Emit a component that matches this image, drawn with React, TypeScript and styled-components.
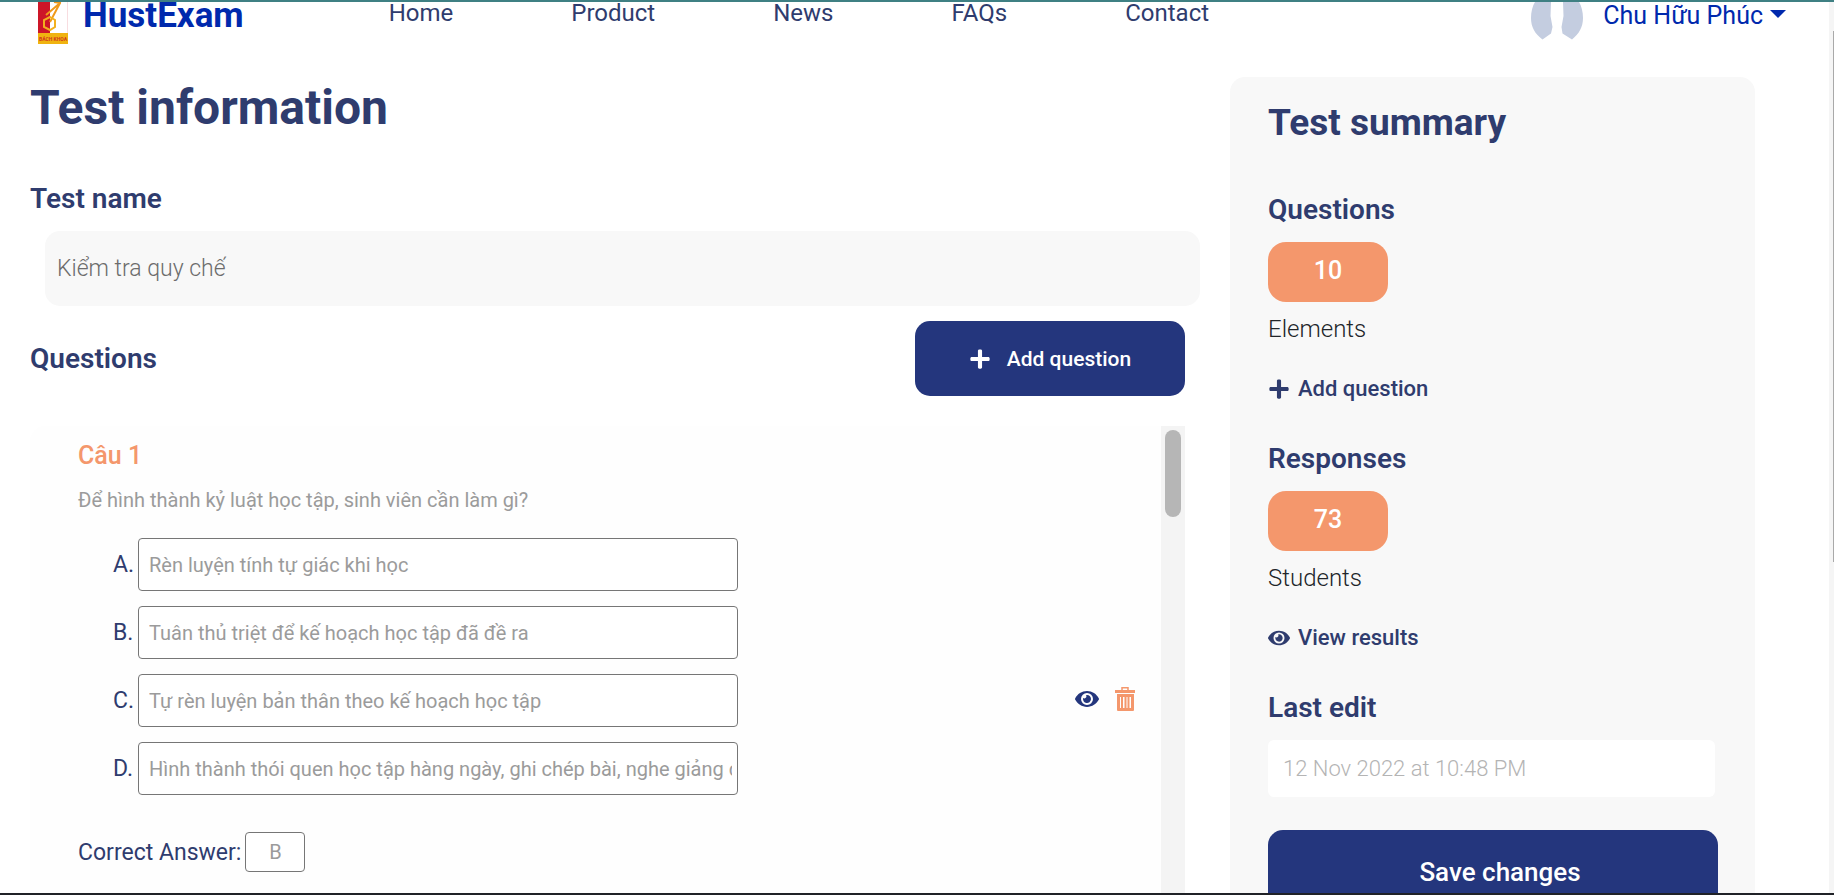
import React from "react";
import styled, { createGlobalStyle } from "styled-components";
import { FaEye, FaPlus } from "react-icons/fa";

const navy = "#2f3c6e";
const royal = "#24367d";
const orange = "#f4976c";

const GlobalStyle = createGlobalStyle`
  *, *::before, *::after { box-sizing: border-box; }
  body { margin: 0; background: #fff; font-family: Roboto, sans-serif; color: #212529; }
  h1, h2, h3, p { margin: 0; }
  button, input { font-family: inherit; }
  button { cursor: pointer; border: 0; padding: 0; }
  a { color: inherit; text-decoration: none; }
`;

const Screen = styled.div`
  display: flex;
  height: 100vh;
  overflow: hidden;
  border-top: 2px solid #3f8083;
  border-bottom: 2px solid #202227;
`;

const Page = styled.div`
  flex: 1;
  min-width: 0;
`;

const PageScroll = styled.div`
  display: flex;
  justify-content: flex-end;
  width: 5px;
  padding-top: 29px;
  background: #f5f5f5;
`;

const PageThumb = styled.div`
  width: 1px;
  height: 531px;
  background: #a9a9a9;
`;

const Header = styled.header`
  display: flex;
  align-items: flex-start;
  height: 75px;
  padding: 0 43px 0 38px;
`;

const Brand = styled.a`
  display: flex;
  gap: 14px;
  color: #0029ad;
  font-size: 35px;
  font-weight: 700;
  line-height: 28px;
`;

const Nav = styled.nav`
  display: flex;
  flex: 1;
  gap: 118px;
  padding-left: 145px;
  color: ${navy};
  font-size: 24px;
  line-height: 22px;
`;

const Account = styled.button`
  display: flex;
  align-items: flex-start;
  background: none;
  color: #0029ad;
  font-size: 25px;
  line-height: 28px;
`;

const AccountName = styled.span`
  margin: 0 7px 0 20px;
`;

const Caret = styled.span`
  margin-top: 8px;
  border: 8px solid transparent;
  border-top-color: #0029ad;
  border-bottom: 0;
`;

const Columns = styled.div`
  display: grid;
  grid-template-columns: minmax(0, 1170fr) minmax(0, 525fr);
  align-items: start;
  gap: 30px;
  padding: 0 74px 0 30px;
`;

const Editor = styled.main`
  padding-top: 2px;
`;

const PageTitle = styled.h1`
  color: ${navy};
  font-size: 48px;
  font-weight: 700;
  line-height: 58px;
`;

const Heading = styled.h3`
  color: ${navy};
  font-size: 28px;
  font-weight: 600;
  line-height: 34px;
`;

const NameLabel = styled.label`
  display: block;
  margin-top: 45px;
`;

const NameInput = styled.input`
  display: block;
  width: calc(100% - 15px);
  height: 75px;
  margin: 15px 0 0 15px;
  padding: 0 12px;
  border: 0;
  border-radius: 15px;
  background: #f8f8f8;
  color: #6c6c6c;
  font-size: 23px;
  font-weight: 300;
`;

const QuestionsBar = styled.div`
  display: flex;
  align-items: center;
  justify-content: space-between;
  margin: 15px 15px 0 0;
`;

const AddButton = styled.button`
  display: flex;
  align-items: center;
  justify-content: center;
  gap: 16px;
  width: 270px;
  height: 75px;
  border-radius: 15px;
  background: ${royal};
  color: #fff;
  font-size: 21px;
  font-weight: 500;
`;

const QuestionList = styled.section`
  display: flex;
  height: 2400px;
  margin: 30px 15px 0 0;
  border-radius: 15px 0 0 0;
  background: #fefefe;
`;

const QuestionCard = styled.article`
  display: flex;
  flex: 1;
  align-items: center;
  align-self: flex-start;
  justify-content: space-between;
  min-width: 0;
  padding-right: 26px;
`;

const QuestionContent = styled.div`
  padding: 14px 0 100px 48px;
`;

const ListScroll = styled.div`
  width: 24px;
  padding: 4px;
  background: #f4f4f4;
`;

const ListThumb = styled.div`
  height: 87px;
  border-radius: 8px;
  background: #b6b6b6;
`;

const QuestionNumber = styled.h2`
  color: ${orange};
  font-size: 25px;
  font-weight: 500;
  line-height: 31px;
`;

const QuestionText = styled.p`
  margin-top: 14px;
  color: #9b9b9b;
  font-size: 20px;
  line-height: 30px;
`;

const Answers = styled.div`
  display: flex;
  flex-direction: column;
  gap: 15px;
  margin-top: 23px;
  padding-left: 35px;
`;

const AnswerRow = styled.label`
  display: flex;
  align-items: center;
  color: ${navy};
  font-size: 23px;
`;

const AnswerLetter = styled.span`
  width: 25px;
`;

const AnswerInput = styled.input`
  width: 600px;
  height: 53px;
  padding: 0 5px 0 10px;
  border: 1px solid #767676;
  border-radius: 4px;
  background: #fff;
  color: #9b9b9b;
  font-size: 20px;
`;

const Actions = styled.div`
  display: flex;
  align-items: center;
  gap: 16px;
`;

const IconButton = styled.button<{ $color: string }>`
  display: flex;
  background: none;
  color: ${(p) => p.$color};
`;

const CorrectRow = styled.label`
  display: flex;
  align-items: center;
  gap: 4px;
  margin-top: 37px;
  color: ${navy};
  font-size: 23px;
`;

const CorrectInput = styled.input`
  width: 60px;
  height: 40px;
  padding: 0;
  border: 1px solid #767676;
  border-radius: 4px;
  background: #fff;
  color: #9b9b9b;
  font-size: 20px;
  text-align: center;
`;

const Summary = styled.aside`
  height: 1000px;
  padding: 23px 37px 0 38px;
  border-radius: 15px;
  background: #f8f8f8;
`;

const SummaryTitle = styled.h2`
  margin-bottom: 47px;
  color: ${navy};
  font-size: 37px;
  font-weight: 700;
  line-height: 46px;
`;

const SummarySection = styled.section`
  margin-bottom: 38px;
`;

const Count = styled.div`
  width: 120px;
  margin-top: 15px;
  padding-bottom: 2px;
  border-radius: 18px;
  background: ${orange};
  color: #fff;
  font-size: 25px;
  font-weight: 500;
  line-height: 58px;
  text-align: center;
`;

const CountCaption = styled.p`
  margin-top: 12px;
  font-size: 24px;
  font-weight: 300;
  line-height: 30px;
`;

const SummaryAction = styled.button`
  display: flex;
  align-items: center;
  gap: 8px;
  margin-top: 30px;
  background: none;
  color: ${navy};
  font-size: 22px;
  font-weight: 500;
  line-height: 30px;
`;

const EditInput = styled.input`
  display: block;
  width: calc(100% - 3px);
  height: 57px;
  margin-top: 15px;
  padding: 0 15px;
  border: 0;
  border-radius: 6px;
  background: #fff;
  color: #b4b4b4;
  font-size: 22px;
  font-weight: 300;
`;

const SaveButton = styled.button`
  width: 100%;
  height: 83px;
  margin-top: 33px;
  padding-left: 14px;
  border-radius: 15px;
  background: ${royal};
  color: #fff;
  font-size: 26px;
  font-weight: 500;
`;

const Logo = () => (
  <svg width="31" height="42" viewBox="0 0 31 42" aria-hidden="true">
    <path d="M0 0h12v31H0z" fill="#cd1628" />
    <path d="M29 0h1v31h-1z" fill="#f8dde0" />
    <path d="M22 1L8 13M22 1L12 20M16 0l7 1" fill="none" stroke="#ef9a1c" strokeWidth="2" />
    <path d="M12 15l5 3v7l-5 3-6-3v-7z" fill="none" stroke="#f2b01e" strokeWidth="2" />
    <path d="M0 31h30v11H0z" fill="#f0b310" />
    <text x="15" y="39" textAnchor="middle" fontSize="5" fontWeight="700" fill="#d03a1c">
      BÁCH KHOA
    </text>
  </svg>
);

const Avatar = () => (
  <svg width="52" height="38" viewBox="0 0 52 38" fill="#c4cde0" aria-hidden="true">
    <path d="M4 0H20L19.500 14L21.500 25L20 31.500L11.500 37.500C4 32 0 25 0 16C0 10 1.500 4 4 0Z" />
    <path d="M32 0H48C50.500 4 52 10 52 16C52 25 48 32 41 37.500L31.500 31.500L30.500 25L32.500 14Z" />
  </svg>
);

const Bin = () => (
  <svg width="20" height="24" viewBox="0 0 20 24" fill="none" aria-hidden="true">
    <path d="M7 3V.8h6V3" stroke="currentColor" strokeWidth="1.500" />
    <path d="M0 3h20v3H0z" fill="currentColor" />
    <path
      fillRule="evenodd"
      fill="currentColor"
      d="M2 7h17v16q0 1-1 1H3q-1 0-1-1zM5 10v11h1V10zM8 10v11h1.500V10zM11.500 10v11h1V10zM14.500 10v11h1.500V10z"
    />
  </svg>
);

const links = ["Home", "Product", "News", "FAQs", "Contact"];

const answers = [
  ["A.", "Rèn luyện tính tự giác khi học"],
  ["B.", "Tuân thủ triệt để kế hoạch học tập đã đề ra"],
  ["C.", "Tự rèn luyện bản thân theo kế hoạch học tập"],
  ["D.", "Hình thành thói quen học tập hàng ngày, ghi chép bài, nghe giảng đầy đủ"],
];

export default function App() {
  return (
    <>
      <GlobalStyle />
      <Screen>
        <Page>
          <Header>
            <Brand href="#">
              <Logo />
              HustExam
            </Brand>
            <Nav>
              {links.map((link) => (
                <a key={link} href="#">
                  {link}
                </a>
              ))}
            </Nav>
            <Account type="button">
              <Avatar />
              <AccountName>Chu Hữu Phúc</AccountName>
              <Caret />
            </Account>
          </Header>
          <Columns>
            <Editor>
              <PageTitle>Test information</PageTitle>
              <NameLabel>
                <Heading as="span">Test name</Heading>
                <NameInput defaultValue="Kiểm tra quy chế" />
              </NameLabel>
              <QuestionsBar>
                <Heading>Questions</Heading>
                <AddButton type="button">
                  <FaPlus size={22} />
                  Add question
                </AddButton>
              </QuestionsBar>
              <QuestionList>
                <QuestionCard>
                  <QuestionContent>
                    <QuestionNumber>Câu 1</QuestionNumber>
                    <QuestionText>Để hình thành kỷ luật học tập, sinh viên cần làm gì?</QuestionText>
                    <Answers>
                      {answers.map(([letter, text]) => (
                        <AnswerRow key={letter}>
                          <AnswerLetter>{letter}</AnswerLetter>
                          <AnswerInput defaultValue={text} />
                        </AnswerRow>
                      ))}
                    </Answers>
                    <CorrectRow>
                      Correct Answer:
                      <CorrectInput defaultValue="B" />
                    </CorrectRow>
                  </QuestionContent>
                  <Actions>
                    <IconButton type="button" $color={royal} aria-label="View question">
                      <FaEye size={24} />
                    </IconButton>
                    <IconButton type="button" $color={orange} aria-label="Delete question">
                      <Bin />
                    </IconButton>
                  </Actions>
                </QuestionCard>
                <ListScroll>
                  <ListThumb />
                </ListScroll>
              </QuestionList>
            </Editor>
            <Summary>
              <SummaryTitle>Test summary</SummaryTitle>
              <SummarySection>
                <Heading>Questions</Heading>
                <Count>10</Count>
                <CountCaption>Elements</CountCaption>
                <SummaryAction type="button">
                  <FaPlus size={22} />
                  Add question
                </SummaryAction>
              </SummarySection>
              <SummarySection>
                <Heading>Responses</Heading>
                <Count>73</Count>
                <CountCaption>Students</CountCaption>
                <SummaryAction type="button">
                  <FaEye size={22} />
                  View results
                </SummaryAction>
              </SummarySection>
              <Heading as="label" htmlFor="last-edit">
                Last edit
              </Heading>
              <EditInput id="last-edit" defaultValue="12 Nov 2022 at 10:48 PM" />
              <SaveButton type="button">Save changes</SaveButton>
            </Summary>
          </Columns>
        </Page>
        <PageScroll>
          <PageThumb />
        </PageScroll>
      </Screen>
    </>
  );
}
